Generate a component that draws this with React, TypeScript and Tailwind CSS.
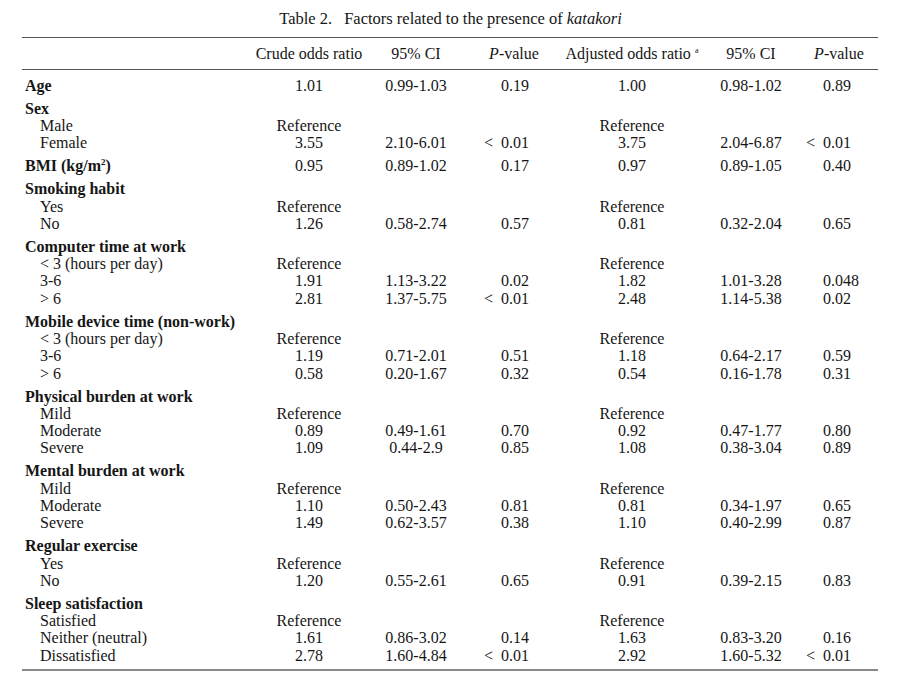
import React from "react";

type Row = { label: string; values?: string[]; reference?: boolean };
type Group = { label: React.ReactNode; values?: string[]; items?: Row[] };

const groups: Group[] = [
  { label: "Age", values: ["1.01", "0.99-1.03", "0.19", "1.00", "0.98-1.02", "0.89"] },
  {
    label: "Sex",
    items: [
      { label: "Male", reference: true },
      { label: "Female", values: ["3.55", "2.10-6.01", "< 0.01", "3.75", "2.04-6.87", "< 0.01"] },
    ],
  },
  {
    label: (
      <>
        BMI (kg/m<sup className="text-[9px] relative -top-[6px]">2</sup>)
      </>
    ),
    values: ["0.95", "0.89-1.02", "0.17", "0.97", "0.89-1.05", "0.40"],
  },
  {
    label: "Smoking habit",
    items: [
      { label: "Yes", reference: true },
      { label: "No", values: ["1.26", "0.58-2.74", "0.57", "0.81", "0.32-2.04", "0.65"] },
    ],
  },
  {
    label: "Computer time at work",
    items: [
      { label: "< 3 (hours per day)", reference: true },
      { label: "3-6", values: ["1.91", "1.13-3.22", "0.02", "1.82", "1.01-3.28", "0.048"] },
      { label: "> 6", values: ["2.81", "1.37-5.75", "< 0.01", "2.48", "1.14-5.38", "0.02"] },
    ],
  },
  {
    label: "Mobile device time (non-work)",
    items: [
      { label: "< 3 (hours per day)", reference: true },
      { label: "3-6", values: ["1.19", "0.71-2.01", "0.51", "1.18", "0.64-2.17", "0.59"] },
      { label: "> 6", values: ["0.58", "0.20-1.67", "0.32", "0.54", "0.16-1.78", "0.31"] },
    ],
  },
  {
    label: "Physical burden at work",
    items: [
      { label: "Mild", reference: true },
      { label: "Moderate", values: ["0.89", "0.49-1.61", "0.70", "0.92", "0.47-1.77", "0.80"] },
      { label: "Severe", values: ["1.09", "0.44-2.9", "0.85", "1.08", "0.38-3.04", "0.89"] },
    ],
  },
  {
    label: "Mental burden at work",
    items: [
      { label: "Mild", reference: true },
      { label: "Moderate", values: ["1.10", "0.50-2.43", "0.81", "0.81", "0.34-1.97", "0.65"] },
      { label: "Severe", values: ["1.49", "0.62-3.57", "0.38", "1.10", "0.40-2.99", "0.87"] },
    ],
  },
  {
    label: "Regular exercise",
    items: [
      { label: "Yes", reference: true },
      { label: "No", values: ["1.20", "0.55-2.61", "0.65", "0.91", "0.39-2.15", "0.83"] },
    ],
  },
  {
    label: "Sleep satisfaction",
    items: [
      { label: "Satisfied", reference: true },
      { label: "Neither (neutral)", values: ["1.61", "0.86-3.02", "0.14", "1.63", "0.83-3.20", "0.16"] },
      { label: "Dissatisfied", values: ["2.78", "1.60-4.84", "< 0.01", "2.92", "1.60-5.32", "< 0.01"] },
    ],
  },
];

const cols = "grid grid-cols-[228px_118px_96px_100px_136px_102px_76px]";

// p-values line up on the decimal point, "< " hangs to the left
const PValue: React.FC<{ value: string; offset: "first" | "second" }> = ({ value, offset }) => {
  const less = value.startsWith("< ");
  const num = less ? value.slice(2) : value;
  return (
    <div className="flex">
      <span className={`${offset === "first" ? "w-[37px]" : "w-[21px]"} text-right whitespace-pre`}>
        {less ? "<  " : ""}
      </span>
      <span>{num}</span>
    </div>
  );
};

const Values: React.FC<{ values?: string[]; reference?: boolean }> = ({ values, reference }) => {
  if (reference) {
    return (
      <>
        <div className="text-center">Reference</div>
        <div />
        <div />
        <div className="text-center">Reference</div>
        <div />
        <div />
      </>
    );
  }
  if (!values) {
    return (
      <>
        <div />
        <div />
        <div />
        <div />
        <div />
        <div />
      </>
    );
  }
  return (
    <>
      <div className="text-center">{values[0]}</div>
      <div className="text-center">{values[1]}</div>
      <PValue value={values[2]} offset="first" />
      <div className="text-center">{values[3]}</div>
      <div className="text-center">{values[4]}</div>
      <PValue value={values[5]} offset="second" />
    </>
  );
};

export default function App() {
  return (
    <div className="w-[900px] h-[687px] bg-white text-[#161616] font-['Liberation_Serif',serif]">
      <div className="h-[37px] flex items-center justify-center pl-[1px] pt-[1px] text-[16.5px]">
        <span>Table 2.</span>
        <span className="ml-[12px]">
          Factors related to the presence of <i>katakori</i>
        </span>
      </div>

      <div className="ml-[22px] w-[856px]">
        <div className="border-t border-[#555]" />
        <div className={`${cols} h-[31px] items-center text-[16px] pt-[1px]`}>
          <div />
          <div className="text-center">Crude odds ratio</div>
          <div className="text-center">95% CI</div>
          <div className="text-center">
            <i>P</i>-value
          </div>
          <div className="text-center">
            Adjusted odds ratio <sup className="text-[8px] relative -top-[6px]">a</sup>
          </div>
          <div className="text-center">95% CI</div>
          <div className="text-center pr-[2px]">
            <i>P</i>-value
          </div>
        </div>
        <div className="border-t border-[#555]" />

        <div className="pt-px pb-[5px] text-[16px] leading-[17.3px]">
          {groups.map((g, gi) => (
            <div key={gi} className="mt-[5.7px]">
              <div className={cols}>
                <div className="pl-[3px] font-bold">{g.label}</div>
                <Values values={g.values} />
              </div>
              {g.items?.map((r, ri) => (
                <div key={ri} className={cols}>
                  <div className="pl-[18px]">{r.label}</div>
                  <Values values={r.values} reference={r.reference} />
                </div>
              ))}
            </div>
          ))}
        </div>
        <div className="border-t-2 border-[#8a8a8a]" />
      </div>
    </div>
  );
}
